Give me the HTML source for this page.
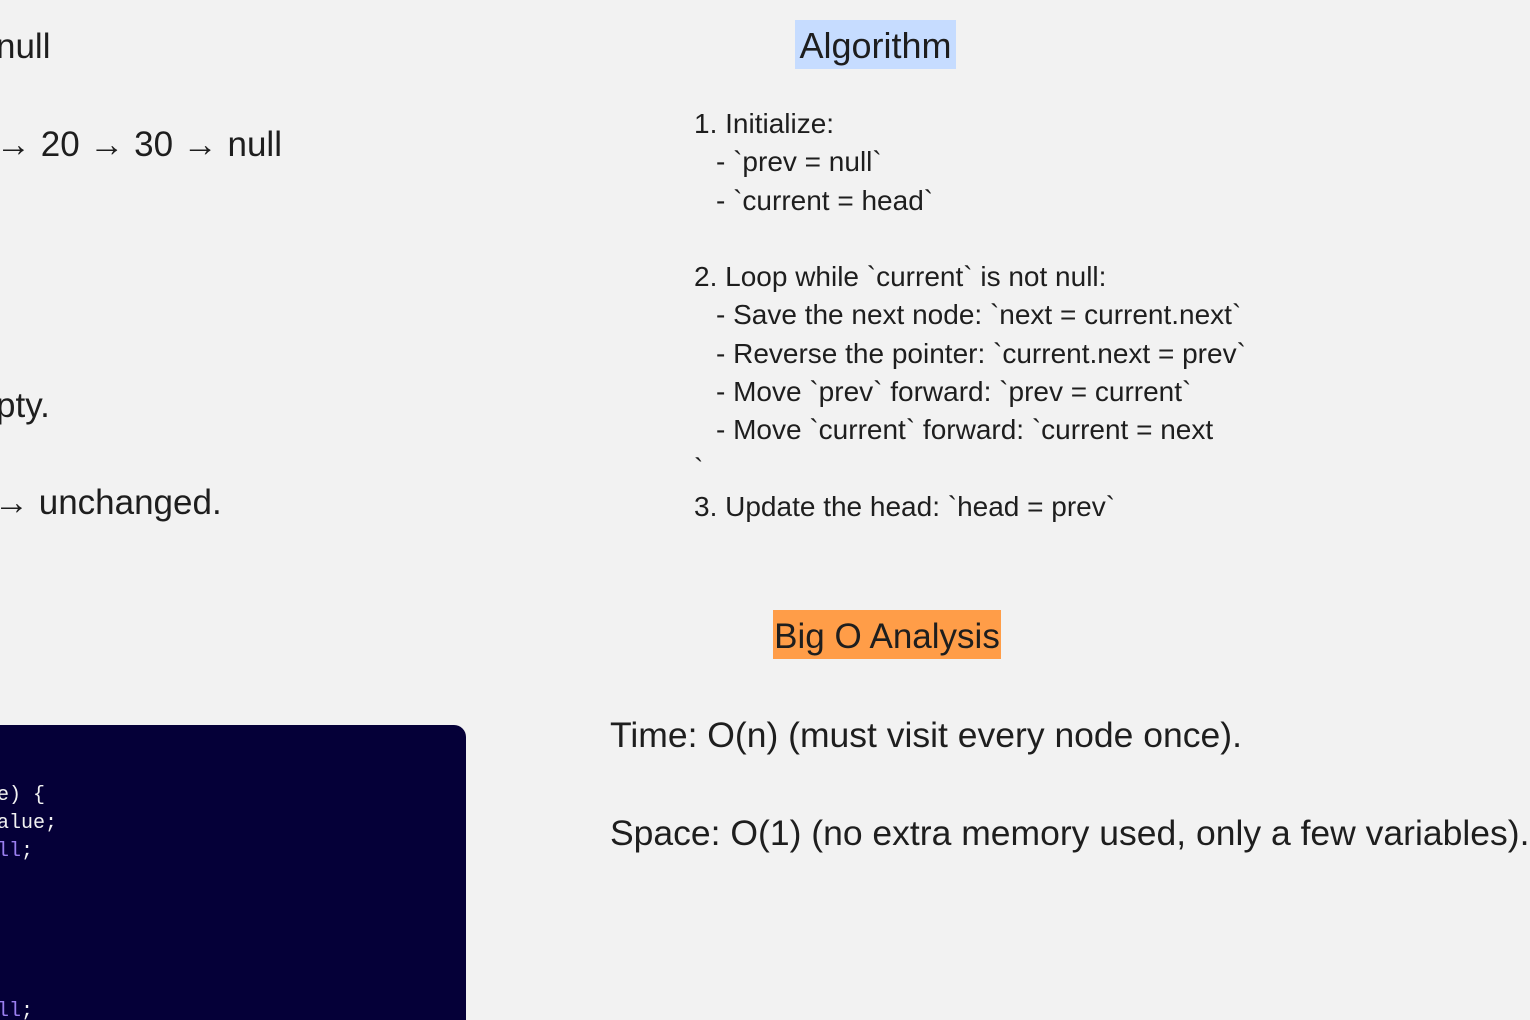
<!DOCTYPE html>
<html><head><meta charset="utf-8"><style>
html,body{margin:0;padding:0;width:1530px;height:1020px;overflow:hidden;background:#f2f2f2;}
body{position:relative;font-family:"Liberation Sans","DejaVu Sans",sans-serif;color:#1e1e1e;}
.t{position:absolute;white-space:nowrap;}
.hl{position:absolute;}
.code{position:absolute;left:-20px;top:725px;width:486px;height:320px;background:#050038;border-radius:12px;}
.c{position:absolute;font-family:"Liberation Mono","DejaVu Sans Mono",monospace;font-size:20px;color:#f2f2f2;white-space:nowrap;}
.p{color:#9b7ff0;}
.ind{display:inline-block;width:22px;}
</style></head><body>
<div class="t" style="left:-4px;top:27px;font-size:35px;line-height:40px;">null</div>
<div class="t" style="left:-4px;top:125px;font-size:35px;line-height:40px;">→ 20 → 30 → null</div>
<div class="t" style="left:-4px;top:386px;font-size:35px;line-height:40px;">pty.</div>
<div class="t" style="left:-6px;top:483px;font-size:35px;line-height:40px;">→ unchanged.</div>

<div class="hl" style="left:795px;top:20px;width:161px;height:49px;background:#c6dcff;"></div>
<div class="t" style="left:795px;top:26px;width:161px;text-align:center;font-size:36px;line-height:40px;">Algorithm</div>

<div class="t" style="left:694px;top:105px;font-size:28px;line-height:38.3px;">
1. Initialize:<br><span class="ind"></span>- `prev = null`<br><span class="ind"></span>- `current = head`<br><br>2. Loop while `current` is not null:<br><span class="ind"></span>- Save the next node: `next = current.next`<br><span class="ind"></span>- Reverse the pointer: `current.next = prev`<br><span class="ind"></span>- Move `prev` forward: `prev = current`<br><span class="ind"></span>- Move `current` forward: `current = next<br>`<br>3. Update the head: `head = prev`</div>

<div class="hl" style="left:773px;top:610px;width:228px;height:49px;background:#ff9d48;"></div>
<div class="t" style="left:773px;top:617px;width:228px;text-align:center;font-size:35px;line-height:40px;">Big O Analysis</div>

<div class="t" style="left:610px;top:715px;font-size:35.5px;line-height:40px;">Time: O(n) (must visit every node once).</div>
<div class="t" style="left:610px;top:813px;font-size:35.5px;line-height:40px;">Space: O(1) (no extra memory used, only a few variables).</div>

<div class="code"></div>
<div class="c" style="left:-3px;top:782px;line-height:28px;">e) {<br>alue;<br><span class="p">ll</span>;</div>
<div class="c" style="left:-3px;top:998px;line-height:28px;"><span class="p">ll</span>;</div>
</body></html>
